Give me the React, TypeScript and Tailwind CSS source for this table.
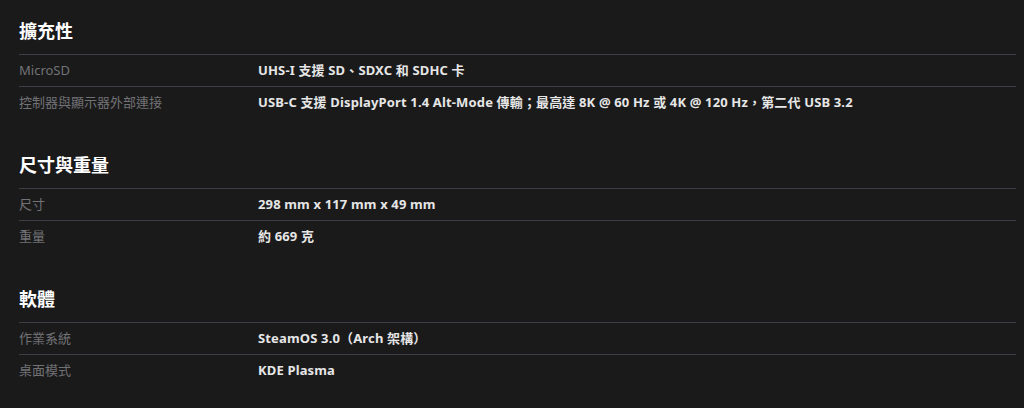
const sections = [
  {
    title: "擴充性",
    rows: [
      ["MicroSD", "UHS-I 支援 SD、SDXC 和 SDHC 卡"],
      [
        "控制器與顯示器外部連接",
        "USB-C 支援 DisplayPort 1.4 Alt-Mode 傳輸；最高達 8K @ 60 Hz 或 4K @ 120 Hz，第二代 USB 3.2",
      ],
    ],
  },
  {
    title: "尺寸與重量",
    rows: [
      ["尺寸", "298 mm x 117 mm x 49 mm"],
      ["重量", "約 669 克"],
    ],
  },
  {
    title: "軟體",
    rows: [
      ["作業系統", "SteamOS 3.0（Arch 架構）"],
      ["桌面模式", "KDE Plasma"],
    ],
  },
];

export default function App() {
  return (
    <div
      className="w-[1024px] h-[408px] overflow-hidden bg-[#1a1a1b] pl-[19px] pr-[8px] pt-[19px]"
      style={{ fontFamily: '"Noto Sans", "Noto Sans CJK TC", sans-serif' }}
    >
      {sections.map((s) => (
        <div key={s.title} className="mb-[35px]">
          <h2 className="text-[18px] leading-[24px] font-bold text-white mb-[11px]">
            {s.title}
          </h2>
          {s.rows.map(([label, value]) => (
            <div
              key={label}
              className="flex items-center h-[32px] border-t border-[#3d3d45]"
            >
              <div className="w-[239px] shrink-0 text-[13px] text-[#727276]">
                {label}
              </div>
              <div className="text-[13px] font-bold tracking-[0.15px] text-[#e6e6e6] whitespace-nowrap">
                {value}
              </div>
            </div>
          ))}
        </div>
      ))}
    </div>
  );
}
